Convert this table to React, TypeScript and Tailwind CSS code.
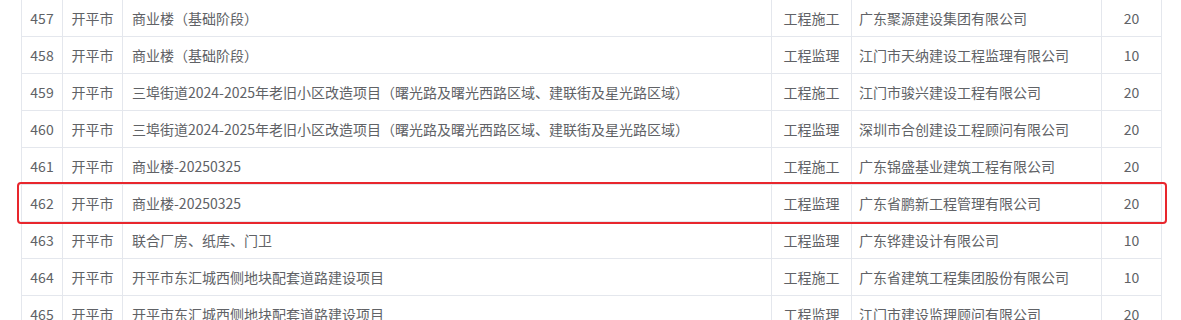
import React from 'react';

interface Row {
    id: number;
    city: string;
    project: string;
    kind: string;
    company: string;
    score: number;
}

const rows: Row[] = [
    { id: 457, city: '开平市', project: '商业楼（基础阶段）', kind: '工程施工', company: '广东聚源建设集团有限公司', score: 20 },
    { id: 458, city: '开平市', project: '商业楼（基础阶段）', kind: '工程监理', company: '江门市天纳建设工程监理有限公司', score: 10 },
    { id: 459, city: '开平市', project: '三埠街道2024-2025年老旧小区改造项目（曙光路及曙光西路区域、建联街及星光路区域）', kind: '工程施工', company: '江门市骏兴建设工程有限公司', score: 20 },
    { id: 460, city: '开平市', project: '三埠街道2024-2025年老旧小区改造项目（曙光路及曙光西路区域、建联街及星光路区域）', kind: '工程监理', company: '深圳市合创建设工程顾问有限公司', score: 20 },
    { id: 461, city: '开平市', project: '商业楼-20250325', kind: '工程施工', company: '广东锦盛基业建筑工程有限公司', score: 20 },
    { id: 462, city: '开平市', project: '商业楼-20250325', kind: '工程监理', company: '广东省鹏新工程管理有限公司', score: 20 },
    { id: 463, city: '开平市', project: '联合厂房、纸库、门卫', kind: '工程监理', company: '广东铧建设计有限公司', score: 10 },
    { id: 464, city: '开平市', project: '开平市东汇城西侧地块配套道路建设项目', kind: '工程施工', company: '广东省建筑工程集团股份有限公司', score: 10 },
    { id: 465, city: '开平市', project: '开平市东汇城西侧地块配套道路建设项目', kind: '工程监理', company: '江门市建设监理顾问有限公司', score: 20 },
];

const cell = 'border border-[#e4e7ed] h-[37px] p-0 whitespace-nowrap';

export default function App() {
    return (
        <div className="w-[1181px] h-[320px] overflow-hidden bg-white text-[14px] text-[#606266] font-['Microsoft_YaHei','Noto_Sans_CJK_SC',sans-serif]">
            <div className="relative pl-[21px] pr-[20px] -mt-px">
                <table className="w-[1140px] table-fixed border-collapse">
                    <colgroup>
                        <col className="w-[41px]" />
                        <col className="w-[60px]" />
                        <col className="w-[649px]" />
                        <col className="w-[80px]" />
                        <col className="w-[250px]" />
                        <col className="w-[60px]" />
                    </colgroup>
                    <tbody>
                        {rows.map((r) => (
                            <tr key={r.id}>
                                <td className={`${cell} text-center`}>{r.id}</td>
                                <td className={`${cell} text-center`}>{r.city}</td>
                                <td className={`${cell} pl-[9px]`}>{r.project}</td>
                                <td className={`${cell} text-center`}>{r.kind}</td>
                                <td className={`${cell} pl-[7px]`}>{r.company}</td>
                                <td className={`${cell} text-center`}>{r.score}</td>
                            </tr>
                        ))}
                    </tbody>
                </table>

                {/* 标注框 */}
                <div className="absolute left-[17px] top-[183px] w-[1150px] h-[42px] border-2 border-[#e8262d] rounded-[4px] pointer-events-none" />
            </div>
        </div>
    );
}
